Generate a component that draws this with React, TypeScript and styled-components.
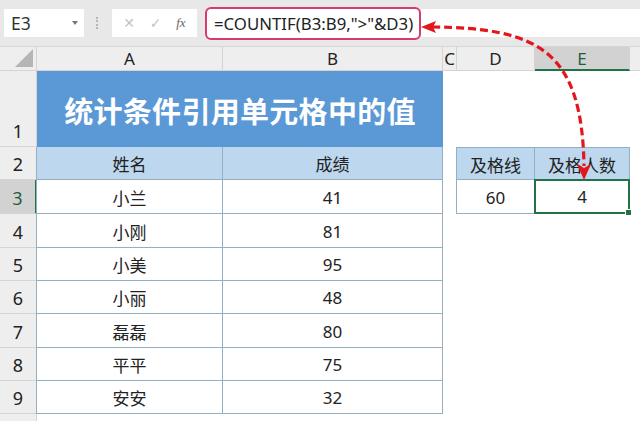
import React from 'react';
import styled, {createGlobalStyle} from 'styled-components';

const GlobalStyle = createGlobalStyle`
  html, body {
    margin: 0;
    padding: 0;
    background: #ffffff;
  }
  body {
    font-family: "Noto Sans", "Noto Sans CJK SC", sans-serif;
    overflow: hidden;
  }
`;

const SEL_GREEN = '#217346';
const GRID_LINE = '#93afc2';

const names = ['小兰', '小刚', '小美', '小丽', '磊磊', '平平', '安安'];
const scores = [41, 81, 95, 48, 80, 75, 32];
const rowHeights = [76, 33, 34, 34, 33, 33, 34, 33, 33];

const App: React.FC = () => {
  return (
    <Page>
      <GlobalStyle />
      <FormulaBar>
        <NameBox>
          <span>E3</span>
          <Caret />
        </NameBox>
        <Grip />
        <FxBox>
          <FxIcon>✕</FxIcon>
          <FxIcon>✓</FxIcon>
          <FxIcon $italic>fx</FxIcon>
        </FxBox>
        <FormulaInput>
          <FormulaText>=COUNTIF(B3:B9,"&gt;"&amp;D3)</FormulaText>
        </FormulaInput>
        <FormulaRest />
      </FormulaBar>

      <Sheet $rows={rowHeights}>
        <Corner>
          <svg width="20" height="20" viewBox="0 0 20 20">
            <polygon points="19,1 19,19 1,19" fill="#b5b5b5" />
          </svg>
        </Corner>
        <ColHeader>A</ColHeader>
        <ColHeader>B</ColHeader>
        <ColHeader>C</ColHeader>
        <ColHeader>D</ColHeader>
        <ColHeader $selected>E</ColHeader>
        <ColHeader $last />

        {rowHeights.map((_, i) => (
          <RowHeader key={i} $row={i + 2} $selected={i + 1 === 3}>
            {i + 1}
          </RowHeader>
        ))}
        <RowHeader $row={11} $last />

        <TitleCell>统计条件引用单元格中的值</TitleCell>

        <TableCell $row={3} $col={2} $head $left>
          姓名
        </TableCell>
        <TableCell $row={3} $col={3} $head>
          成绩
        </TableCell>
        {names.map((n, i) => (
          <React.Fragment key={n}>
            <TableCell $row={i + 4} $col={2} $left>
              {n}
            </TableCell>
            <TableCell $row={i + 4} $col={3}>
              {scores[i]}
            </TableCell>
          </React.Fragment>
        ))}

        <TableCell $row={3} $col={5} $head $left $top>
          及格线
        </TableCell>
        <TableCell $row={3} $col={6} $head $top>
          及格人数
        </TableCell>
        <TableCell $row={4} $col={5} $left>
          60
        </TableCell>
        <TableCell $row={4} $col={6}>
          <ActiveCell>
            4
            <FillHandle />
          </ActiveCell>
        </TableCell>
      </Sheet>

      <ArrowLayer width="640" height="421" viewBox="0 0 640 421">
        <path
          d="M 432 27 C 538 28, 582 50, 584 166"
          fill="none"
          stroke="#e3161b"
          strokeWidth="3.2"
          strokeDasharray="8 4"
        />
        <polygon points="421,27 436,21 433,27 436,33" fill="#e3161b" />
        <polygon points="584,180 577,164 584,168 591,164" fill="#e3161b" />
      </ArrowLayer>
    </Page>
  );
};

export default App;

const Page = styled.div`
  position: relative;
  width: 640px;
  height: 421px;
  overflow: hidden;
  background: #ffffff;
`;

const FormulaBar = styled.div`
  height: 47px;
  display: flex;
  align-items: center;
  background: #e8e8e8;
  border-bottom: 1px solid #d6d6d6;
  box-sizing: border-box;
  padding-left: 4px;
`;

const NameBox = styled.div`
  width: 80px;
  height: 28px;
  background: #fff;
  box-sizing: border-box;
  display: flex;
  align-items: center;
  justify-content: space-between;
  padding: 0 6px 0 7px;
  font-size: 17.5px;
  color: #333;
  margin-top: -1px;
`;

const Caret = styled.div`
  width: 0;
  height: 0;
  border-left: 3px solid transparent;
  border-right: 3px solid transparent;
  border-top: 4px solid #777;
`;

const Grip = styled.div`
  width: 2px;
  height: 12px;
  margin: 0 12px 0 12px;
  border-left: 2px dotted #b5b5b5;
`;

const FxBox = styled.div`
  width: 85px;
  height: 28px;
  background: #fff;
  display: flex;
  align-items: center;
  justify-content: space-around;
  padding: 0 4px;
  box-sizing: border-box;
  margin-top: -1px;
`;

const FxIcon = styled.span<{$italic?: boolean}>`
  font-size: ${(p) => (p.$italic ? '13px' : '14px')};
  color: ${(p) => (p.$italic ? '#666' : '#c4c4c4')};
  font-style: ${(p) => (p.$italic ? 'italic' : 'normal')};
  font-family: ${(p) =>
    p.$italic ? '"Liberation Serif", serif' : '"DejaVu Sans", sans-serif'};
`;

const FormulaInput = styled.div`
  margin-left: 8px;
  width: 216px;
  height: 33px;
  box-sizing: border-box;
  border: 2.5px solid #d83a6a;
  border-radius: 6px;
  background: #fff;
  display: flex;
  align-items: center;
  padding-left: 7px;
  position: relative;
  z-index: 1;
`;

const FormulaText = styled.span`
  font-size: 16.8px;
  color: #222;
  white-space: nowrap;
`;

const FormulaRest = styled.div`
  flex: 1;
  height: 28px;
  background: #fff;
  margin-top: -1px;
`;

const Sheet = styled.div<{$rows: number[]}>`
  display: grid;
  grid-template-columns: 37px 186px 220px 14px 78px 95px 1fr;
  grid-template-rows: 24px ${(p) => p.$rows.map((r) => `${r}px`).join(' ')} 1fr;
  height: 374px;
`;

const Corner = styled.div`
  grid-row: 1;
  grid-column: 1;
  background: #eeeeee;
  border-right: 1px solid #d4d4d4;
  border-bottom: 1px solid #d4d4d4;
  display: flex;
  align-items: flex-end;
  justify-content: flex-end;
  padding: 0 2px 2px 0;
`;

const ColHeader = styled.div<{$selected?: boolean; $last?: boolean}>`
  grid-row: 1;
  background: ${(p) => (p.$selected ? '#d2d2d2' : '#eeeeee')};
  border-right: ${(p) => (p.$last ? 'none' : '1px solid #d4d4d4')};
  border-bottom: ${(p) =>
    p.$selected ? `2px solid ${SEL_GREEN}` : '1px solid #d4d4d4'};
  color: ${(p) => (p.$selected ? '#1f5e3a' : '#222')};
  font-size: 17px;
  display: flex;
  align-items: center;
  justify-content: center;
  overflow: hidden;
`;

const RowHeader = styled.div<{$row: number; $selected?: boolean; $last?: boolean}>`
  grid-column: 1;
  grid-row: ${(p) => p.$row};
  background: ${(p) => (p.$selected ? '#d2d2d2' : '#eeeeee')};
  border-right: ${(p) =>
    p.$selected ? `2px solid ${SEL_GREEN}` : '1px solid #d4d4d4'};
  border-bottom: ${(p) => (p.$last ? 'none' : '1px solid #d4d4d4')};
  color: ${(p) => (p.$selected ? '#1f5e3a' : '#222')};
  font-size: 18px;
  display: flex;
  align-items: flex-end;
  justify-content: center;
  padding-bottom: 3px;
  box-sizing: border-box;
`;

const TitleCell = styled.div`
  grid-row: 2;
  grid-column: 2 / span 2;
  background: #5a98d6;
  color: #ffffff;
  font-family: "Noto Sans CJK SC", sans-serif;
  font-weight: 700;
  font-size: 29px;
  display: flex;
  align-items: center;
  justify-content: center;
  letter-spacing: 0.3px;
  padding-top: 2px;
`;

const TableCell = styled.div<{
  $row: number;
  $col: number;
  $head?: boolean;
  $left?: boolean;
  $top?: boolean;
}>`
  grid-row: ${(p) => p.$row};
  grid-column: ${(p) => p.$col};
  position: relative;
  background: ${(p) => (p.$head ? '#bdd7ee' : '#ffffff')};
  border-right: 1px solid ${GRID_LINE};
  border-bottom: 1px solid ${GRID_LINE};
  border-left: ${(p) => (p.$left ? `1px solid ${GRID_LINE}` : 'none')};
  border-top: ${(p) => (p.$top ? `1px solid ${GRID_LINE}` : 'none')};
  margin-left: ${(p) => (p.$left ? '-1px' : '0')};
  font-family: "Noto Sans", "Noto Sans CJK SC", sans-serif;
  font-size: 17px;
  color: #222;
  display: flex;
  align-items: center;
  justify-content: center;
  padding-top: 1px;
`;

const ActiveCell = styled.div`
  position: absolute;
  inset: -1px -1px -1px -1px;
  border: 2px solid ${SEL_GREEN};
  display: flex;
  align-items: center;
  justify-content: center;
`;

const FillHandle = styled.div`
  position: absolute;
  right: -4px;
  bottom: -4px;
  width: 5px;
  height: 5px;
  background: ${SEL_GREEN};
  border: 1px solid #fff;
`;

const ArrowLayer = styled.svg`
  position: absolute;
  left: 0;
  top: 0;
  pointer-events: none;
  z-index: 2;
`;
